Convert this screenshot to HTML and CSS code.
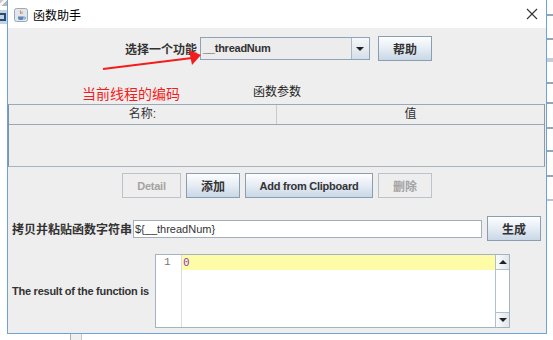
FILE: index.html
```html
<!DOCTYPE html>
<html lang="zh-CN">
<head>
    <meta charset="UTF-8">
    <meta name="viewport" content="width=device-width, initial-scale=1.0">
    <title>函数助手</title>
    <link rel="stylesheet" href="styles.css">
</head>
<body>
    <div class="desk">
        <div class="desk-left">
            <span class="desk-icon-a"></span>
            <span class="desk-icon-b"><span class="desk-glyph"></span></span>
        </div>
        <div class="window">
            <div class="titlebar">
                <svg class="app-icon" width="14" height="14" viewBox="0 0 14 14">
                    <rect x="0.5" y="0.5" width="13" height="13" rx="2" fill="#dfe6ee" stroke="#9aa8b8"/>
                    <path d="M4 8.5h5.5v1.5a2 2 0 0 1-2 2h-1.5a2 2 0 0 1-2-2z" fill="#5b86b5"/>
                    <path d="M9.5 9h1a1 1 0 0 1 0 2h-1" fill="none" stroke="#5b86b5" stroke-width="0.8"/>
                    <path d="M6.5 2.5c-1 1.2 1 1.8 0 3.5M8 3.5c-.6.8.6 1.2 0 2.3" fill="none" stroke="#e07b20" stroke-width="1"/>
                </svg>
                <span class="title">函数助手</span>
                <svg class="close" width="12" height="12" viewBox="0 0 12 12">
                    <path d="M1 1L11 11M11 1L1 11" stroke="#333" stroke-width="1.1"/>
                </svg>
            </div>
            <div class="content">
                <div class="row pick">
                    <label class="label zh" for="fn">选择一个功能</label>
                    <div class="combo" id="fn">
                        <span class="combo-value">__threadNum</span>
                        <span class="combo-arrow"></span>
                    </div>
                    <button class="btn zh help">帮助</button>
                </div>
                <div class="params-title">函数参数</div>
                <div class="table">
                    <div class="thead">
                        <div class="th">名称:</div>
                        <div class="th">值</div>
                    </div>
                    <div class="tbody"></div>
                </div>
                <div class="row actions">
                    <button class="btn detail" disabled>Detail</button>
                    <button class="btn zh add">添加</button>
                    <button class="btn clip">Add from Clipboard</button>
                    <button class="btn zh del" disabled>删除</button>
                </div>
                <div class="row copy">
                    <label class="label zh copy-label" for="fnstr">拷贝并粘贴函数字符串</label>
                    <input class="field" id="fnstr" type="text" value="${__threadNum}">
                    <button class="btn zh gen">生成</button>
                </div>
                <div class="row result">
                    <span class="label result-label">The result of the function is</span>
                    <div class="editor">
                        <div class="gutter">1</div>
                        <div class="code">
                            <div class="line-current">0</div>
                        </div>
                        <div class="scrollbar">
                            <span class="sb-btn up"></span>
                            <span class="sb-track"></span>
                            <span class="sb-btn down"></span>
                        </div>
                    </div>
                </div>
            </div>
        </div>
        <div class="desk-right">
            <svg width="7" height="334" viewBox="0 0 7 334">
                <g fill="#93a6ba">
                    <rect y="14" width="7" height="2"/>
                    <rect y="38" width="7" height="2"/>
                    <rect y="58" width="7" height="4" fill="#c4ced8"/>
                    <rect y="82" width="7" height="2"/>
                    <rect y="102" width="7" height="2"/>
                    <rect y="127" width="7" height="2"/>
                    <rect y="150" width="7" height="2"/>
                    <rect y="175" width="7" height="2"/>
                    <rect y="199" width="7" height="2" fill="#b7c3cf"/>
                </g>
            </svg>
        </div>
    </div>
    <div class="desk-bottom">
        <span class="desk-tab"></span>
    </div>

    <!-- annotation drawn over the screenshot -->
    <svg class="note-arrow" width="553" height="340" viewBox="0 0 553 340">
        <line x1="103" y1="69" x2="192" y2="58" stroke="#f41c1c" stroke-width="2"/>
        <polygon points="201,55 189,50 192,65" fill="#f41c1c"/>
    </svg>
    <span class="note-text">当前线程的编码</span>
</body>
</html>
```

FILE: styles.css
```css
* {
    box-sizing: border-box;
    margin: 0;
    padding: 0;
}

:root {
    --panel: #eeeeee;
    --win-border: #6ea3d8;
    --text: #333333;
    --line: #9aa9b8;
    --btn-border: #8b9db0;
    --disabled: #a3a3a3;
    --note: #f41c1c;
}

body {
    width: 553px;
    height: 340px;
    overflow: hidden;
    background: white;
    position: relative;
    font-family: "Liberation Sans", "Noto Sans CJK SC", sans-serif;
    color: var(--text);
}

.desk {
    display: flex;
    height: 334px;
}

.desk-left {
    width: 7px;
    display: flex;
    flex-direction: column;
    overflow: hidden;
}

.desk-icon-a {
    display: block;
    height: 6px;
    width: 7px;
    background: linear-gradient(135deg, #c9c9c9 30%, #f4f4f4 30% 55%, #b5b5b5 55%);
}

.desk-icon-b {
    display: block;
    margin-top: 4px;
    height: 14px;
    width: 7px;
    background: #c3d3e6;
    padding: 3px 1px 3px 0;
}

.desk-glyph {
    display: block;
    height: 8px;
    border: 2px solid #2c4a6e;
    border-left: none;
}

.desk-right {
    width: 6px;
    overflow: hidden;
}

.desk-right svg {
    display: block;
}

.desk-bottom {
    height: 6px;
    padding-left: 70px;
}

.desk-tab {
    display: block;
    width: 12px;
    height: 6px;
    border-left: 1px solid #b0b0b0;
    border-right: 1px solid #c8c8c8;
    background: #f0f0f0;
}

/* window */

.window {
    width: 540px;
    height: 334px;
    border: 1px solid var(--win-border);
    border-top: none;
    background: var(--panel);
    display: flex;
    flex-direction: column;
}

.titlebar {
    height: 28px;
    background: white;
    display: flex;
    align-items: center;
    padding-left: 6px;
    padding-right: 8px;
}

.app-icon {
    display: block;
    margin-top: 1px;
}

.title {
    margin-left: 5px;
    font-size: 12px;
    color: #000;
    flex: 1;
}

.close {
    display: block;
    margin-top: -1px;
}

.content {
    flex: 1;
    display: flex;
    flex-direction: column;
}

.row {
    display: flex;
    align-items: center;
}

.label {
    font-size: 11px;
    font-weight: bold;
    letter-spacing: -0.25px;
    white-space: nowrap;
}

.zh {
    font-size: 12px;
    letter-spacing: 0;
}

/* buttons */

.btn {
    height: 25px;
    border: 1px solid var(--btn-border);
    background: linear-gradient(#fdfeff, #e8eef5 45%, #c9d7e6);
    font-family: inherit;
    font-size: 11px;
    font-weight: bold;
    letter-spacing: -0.25px;
    color: var(--text);
}

.btn.zh {
    font-size: 12px;
    letter-spacing: 0;
}

.btn:disabled {
    background: var(--panel);
    border-color: #bcc3ca;
    color: var(--disabled);
}

/* pick a function */

.pick {
    margin-top: 8px;
    padding-left: 117px;
}

.pick .label {
    width: 75px;
}

.combo {
    width: 170px;
    height: 23px;
    border: 1px solid #8ea3b9;
    background: #ececec;
    display: flex;
    align-items: stretch;
}

.combo-value {
    flex: 1;
    font-size: 11px;
    font-weight: bold;
    letter-spacing: -0.25px;
    line-height: 21px;
    padding-left: 2px;
}

.combo-arrow {
    width: 18px;
    border-left: 1px solid #a9b8c7;
    background: linear-gradient(#f6f8fa, #d5dfe9);
    position: relative;
}

.combo-arrow::after {
    content: "";
    position: absolute;
    left: 4px;
    top: 9px;
    border-left: 4px solid transparent;
    border-right: 4px solid transparent;
    border-top: 4px solid #222;
}

.help {
    width: 54px;
    margin-left: 8px;
}

/* parameters table */

.params-title {
    margin-top: 23px;
    height: 16px;
    line-height: 16px;
    font-size: 12px;
    text-align: center;
    color: #222;
}

.table {
    margin-top: 4px;
    margin-right: 1px;
    height: 63px;
    border-top: 1px solid var(--line);
    border-left: 1px solid #7d93aa;
    border-right: 1px solid #8e9aa6;
    border-bottom: 1px solid #a8b3be;
    display: flex;
    flex-direction: column;
}

.thead {
    height: 20px;
    display: flex;
    border-bottom: 1px solid var(--line);
}

.th {
    flex: 1;
    text-align: center;
    font-size: 12px;
    line-height: 19px;
    color: #333;
}

.th + .th {
    border-left: 1px solid #c2ccd6;
    flex: 0 0 268px;
}

.tbody {
    flex: 1;
}

/* action buttons */

.actions {
    margin-top: 6px;
    padding-left: 114px;
    gap: 5px;
}

.detail { width: 59px; }
.add { width: 54px; }
.clip { width: 128px; }
.del { width: 54px; }

/* copy and paste */

.copy {
    margin-top: 18px;
    padding-left: 4px;
}

.copy-label {
    width: 121px;
}

.field {
    width: 349px;
    height: 18px;
    border: 1px solid #a3aebb;
    background: white;
    font-family: inherit;
    font-size: 11px;
    color: var(--text);
    padding-left: 1px;
    outline: none;
}

.gen {
    width: 54px;
    margin-left: 5px;
}

/* result */

.result {
    margin-top: 13px;
    padding-left: 4px;
}

.result-label {
    width: 143px;
}

.editor {
    width: 355px;
    height: 74px;
    border: 1px solid #a5b2bf;
    background: white;
    display: flex;
}

.gutter {
    width: 26px;
    border-right: 1px solid #dcdcdc;
    font-family: "Liberation Mono", monospace;
    font-size: 11px;
    line-height: 15px;
    color: #777;
    padding-left: 8px;
}

.code {
    flex: 1;
}

.line-current {
    height: 15px;
    background: #fffca8;
    font-family: "DejaVu Sans Mono", monospace;
    font-size: 11px;
    line-height: 15px;
    color: #9a3cc8;
    padding-left: 1px;
}

.scrollbar {
    width: 14px;
    border-left: 1px solid #b3bfcb;
    display: flex;
    flex-direction: column;
    background: #f3f3f3;
}

.sb-btn {
    height: 15px;
    background: linear-gradient(90deg, #fbfcfd, #dfe6ee);
    border-bottom: 1px solid #b3bfcb;
    position: relative;
}

.sb-btn.down {
    border-bottom: none;
    border-top: 1px solid #b3bfcb;
}

.sb-track {
    flex: 1;
    background: white;
}

.sb-btn::after {
    content: "";
    position: absolute;
    left: 3px;
    top: 5px;
    border-left: 4px solid transparent;
    border-right: 4px solid transparent;
}

.sb-btn.up::after {
    border-bottom: 4px solid #222;
}

.sb-btn.down::after {
    border-top: 4px solid #222;
}

/* red annotation laid over the screenshot */

.note-arrow {
    position: absolute;
    left: 0;
    top: 0;
    pointer-events: none;
}

.note-text {
    position: absolute;
    left: 82px;
    top: 84px;
    font-size: 14px;
    line-height: 18px;
    color: var(--note);
    font-family: "Noto Sans CJK SC", sans-serif;
}
```
